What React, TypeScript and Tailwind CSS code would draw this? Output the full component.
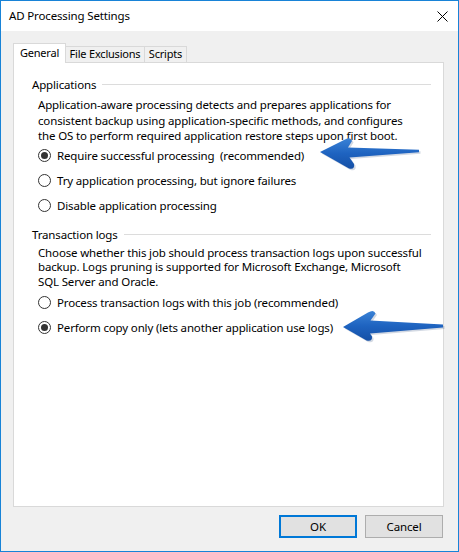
import React from "react";

const font = { fontFamily: '"Noto Sans", "Open Sans", sans-serif' };

function Radio({ checked, label }: { checked?: boolean; label: string }) {
  return (
    <div className="flex items-center h-[20px] ml-[6px]">
      <span className="flex items-center justify-center w-[13px] h-[13px] rounded-full border border-[#333333] bg-white shrink-0">
        {checked && <span className="block w-[7px] h-[7px] rounded-full bg-[#333333]" />}
      </span>
      <span className="ml-[6px] whitespace-pre">{label}</span>
    </div>
  );
}

function GroupHeader({ title }: { title: string }) {
  return (
    <div className="flex items-center h-[15px] leading-[15px]">
      <span className="whitespace-nowrap">{title}</span>
      <span className="flex-1 h-px bg-[#dcdcdc] ml-[6px]" />
    </div>
  );
}

function Pointer({ d, id }: { d: string; id: string }) {
  return (
    <svg className="absolute left-0 top-0 pointer-events-none" width="459" height="552" viewBox="0 0 459 552">
      <defs>
        <linearGradient id={id} x1="0" y1="0" x2="0" y2="1">
          <stop offset="0" stopColor="#3a82d6" />
          <stop offset="0.5" stopColor="#1e63c0" />
          <stop offset="1" stopColor="#1550a6" />
        </linearGradient>
      </defs>
      <path d={d} fill="#0b2f66" opacity="0.18" transform="translate(1.5 1.5)" />
      <path d={d} fill={`url(#${id})`} />
    </svg>
  );
}

export default function App() {
  return (
    <div
      className="relative w-[459px] h-[552px] border border-[#1883d7] bg-[#f0f0f0] flex flex-col text-[11.5px] tracking-[-0.15px] text-black overflow-hidden"
      style={font}
    >
      {/* title bar */}
      <div className="h-[30px] bg-white flex items-center justify-between pl-[8px] pr-[10px] shrink-0">
        <span className="text-[11.5px] tracking-[-0.15px] whitespace-nowrap">AD Processing Settings</span>
        <svg width="11" height="11" viewBox="0 0 11 11">
          <path d="M0.5 0.5 L10.5 10.5 M10.5 0.5 L0.5 10.5" stroke="#000" strokeWidth="1" />
        </svg>
      </div>

      <div className="flex flex-col pl-[12px] pr-[14px] pt-[12px]">
        {/* tabs */}
        <div className="flex items-end h-[19px] whitespace-nowrap text-[11px] tracking-[-0.2px]">
          <div className="relative z-10 -mb-px h-[20px] w-[53px] bg-white border border-b-0 border-[#d9d9d9] flex items-center justify-center pb-px">
            General
          </div>
          <div className="h-[16px] w-[79px] border-t border-r border-[#d9d9d9] flex items-center justify-center">
            File Exclusions
          </div>
          <div className="h-[16px] w-[42px] border-t border-r border-[#d9d9d9] flex items-center justify-center">
            Scripts
          </div>
        </div>

        {/* tab page */}
        <div className="h-[445px] bg-white border border-[#d9d9d9] pl-[18px] pr-[12px] pt-[14px] leading-[15px]">
          <GroupHeader title="Applications" />
          <div className="ml-[6px] mt-[5px] whitespace-nowrap leading-[15.5px]">
            Application-aware processing detects and prepares applications for
            <br />
            consistent backup using application-specific methods, and configures
            <br />
            the OS to perform required application restore steps upon first boot.
          </div>
          <div className="mt-[2px] flex flex-col gap-[5px]">
            <Radio checked label="Require successful processing  (recommended)" />
            <Radio label="Try application processing, but ignore failures" />
            <Radio label="Disable application processing" />
          </div>

          <div className="mt-[11px]">
            <GroupHeader title="Transaction logs" />
          </div>
          <div className="ml-[6px] mt-[4px] whitespace-nowrap leading-[14.5px]">
            Choose whether this job should process transaction logs upon successful
            <br />
            backup. Logs pruning is supported for Microsoft Exchange, Microsoft
            <br />
            SQL Server and Oracle.
          </div>
          <div className="mt-[3px] flex flex-col gap-[5px]">
            <Radio label="Process transaction logs with this job (recommended)" />
            <Radio checked label="Perform copy only (lets another application use logs)" />
          </div>
        </div>

        {/* dialog buttons */}
        <div className="flex justify-end gap-[8px] mt-[8px] pr-px">
          <button className="w-[78px] h-[23px] bg-[#e1e1e1] border-2 border-[#0078d7] flex items-center justify-center">
            OK
          </button>
          <button className="w-[78px] h-[23px] bg-[#e1e1e1] border border-[#adadad] flex items-center justify-center">
            Cancel
          </button>
        </div>
      </div>

      {/* callout arrows */}
      <Pointer
        id="ptrA"
        d="M319 151 L344 138.5 Q350 135.5 351 140 L347 146.5 L418 148.8 L418 151.2 L348.5 156.5 L353 163 Q354 169 348 167.5 Z"
      />
      <Pointer
        id="ptrB"
        d="M342 326 L367 311.5 Q373 308 374.5 312.5 L369.5 319.5 L442 323.5 L442 326.5 L369 332.5 L371 335.5 Q371.5 341 365.5 339.5 Z"
      />
    </div>
  );
}
